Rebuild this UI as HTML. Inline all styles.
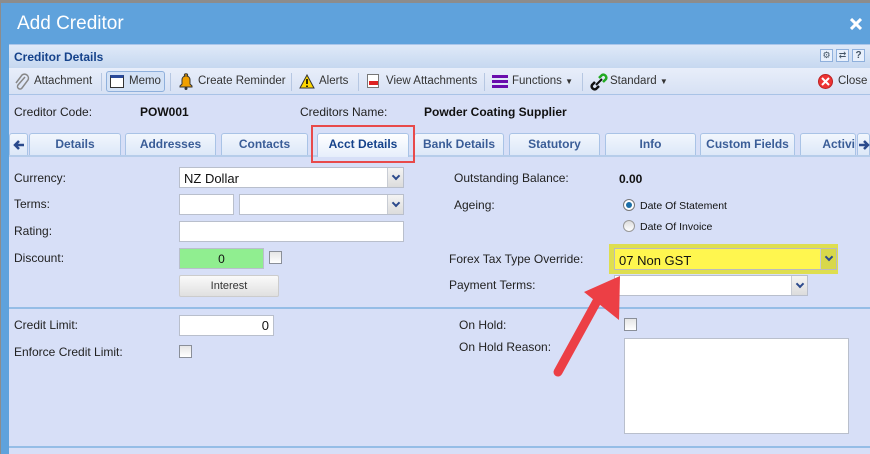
<!DOCTYPE html>
<html><head><meta charset="utf-8"><style>
*{margin:0;padding:0;box-sizing:border-box}
body{width:870px;height:454px;overflow:hidden;background:#8c8c8c;font-family:"Liberation Sans",Arial,sans-serif;font-size:12px;color:#111;position:relative}
.a{position:absolute}
.lbl{position:absolute;font-size:12px;color:#222}
.inp{position:absolute;background:#fff;border:1px solid #b9bfcc;height:21px}
.dd{position:absolute;right:0;top:0;bottom:0;width:16px;border-left:1px solid #c8ccd4;background:linear-gradient(#f4f4f4,#dcdcdc)}
.dd:after{content:"";position:absolute;left:5px;top:5px;width:4px;height:4px;border-right:2px solid #2c4a8c;border-bottom:2px solid #2c4a8c;transform:rotate(45deg)}
.tab{position:absolute;top:133px;height:22px;border:1px solid #a9c3e6;border-bottom:none;border-radius:3px 3px 0 0;background:linear-gradient(#f2f6fd,#dde8f8);color:#3a5d97;font-weight:bold;font-size:12px;text-align:center;line-height:21px}
.cb{position:absolute;width:13px;height:13px;border:1px solid #8a8f99;background:linear-gradient(#e6e6e6,#fff)}
.tb{position:absolute;top:75px;color:#333;font-size:11.5px}
.sep{position:absolute;top:73px;width:1px;height:18px;background:#b6c7e2}
</style></head><body>
<div class="a" style="left:1px;top:3px;width:869px;height:451px;background:#5fa2dc"></div>
<div class="a" style="left:17px;top:13px;font-size:19px;color:#fff">Add Creditor</div>
<svg class="a" style="left:850px;top:18px" width="12" height="12"><path d="M1 1L11 11M11 1L1 11" stroke="#fff" stroke-width="3"/></svg>
<!-- panel -->
<div class="a" style="left:9px;top:44px;width:861px;height:410px;background:#d7dff7"></div>
<div class="a" style="left:9px;top:44px;width:861px;height:24px;background:linear-gradient(#dfe9f8,#c6d8f0);border-top:1px solid #aac6ea"></div>
<div class="a" style="left:14px;top:50px;font-weight:bold;color:#15428b;font-size:12px">Creditor Details</div>
<div class="a" style="left:820px;top:49px;width:13px;height:13px;border:1px solid #8fb0dc;background:#e8f0fc;font-size:9px;color:#456;text-align:center">⚙</div>
<div class="a" style="left:836px;top:49px;width:13px;height:13px;border:1px solid #8fb0dc;background:#e8f0fc;font-size:9px;color:#456;text-align:center">⇄</div>
<div class="a" style="left:852px;top:49px;width:13px;height:13px;border:1px solid #8fb0dc;background:#e8f0fc;font-size:10px;color:#456;text-align:center;font-weight:bold">?</div>
<div class="a" style="left:9px;top:68px;width:861px;height:27px;background:linear-gradient(#e8eefa,#d7e1f4);border-bottom:1px solid #a9c3e6"></div>
<svg class="a" style="left:14px;top:73px" width="16" height="18"><path d="M11 4L4 12a2.5 2.5 0 0 0 4 3L14 7a4 4 0 0 0-6-5L2 10" fill="none" stroke="#888" stroke-width="1.5"/></svg>
<div class="tb" style="left:34px">Attachment</div>
<div class="sep" style="left:101px"></div>
<div class="a" style="left:106px;top:71px;width:59px;height:21px;border:1px solid #8fb0dc;border-radius:3px;background:#d4e2f6"></div>
<div class="a" style="left:110px;top:75px;width:14px;height:13px;border:1px solid #333;border-top:3px solid #2a4a9a;background:#fff"></div>
<div class="tb" style="left:129px">Memo</div>
<div class="sep" style="left:170px"></div>
<svg class="a" style="left:178px;top:73px" width="16" height="17"><path d="M8 1a1 1 0 0 1 1 2a4 4 0 0 1 3 4v4l2 2v1H2v-1l2-2V7a4 4 0 0 1 3-4a1 1 0 0 1 1-2z" fill="#f0a000" stroke="#333" stroke-width="1"/><circle cx="8" cy="15.5" r="1.5" fill="#333"/></svg>
<div class="tb" style="left:198px">Create Reminder</div>
<div class="sep" style="left:291px"></div>
<svg class="a" style="left:299px;top:74px" width="16" height="15"><path d="M8 1L15 14H1z" fill="#ffd800" stroke="#333"/><path d="M8 5v5M8 11.5v1.5" stroke="#000" stroke-width="1.6"/></svg>
<div class="tb" style="left:319px">Alerts</div>
<div class="sep" style="left:358px"></div>
<div class="a" style="left:367px;top:74px;width:12px;height:14px;border:1px solid #777;background:#fff"><div style="position:absolute;left:1px;top:6px;width:9px;height:4px;background:#d22"></div></div>
<div class="tb" style="left:386px">View Attachments</div>
<div class="sep" style="left:484px"></div>
<div class="a" style="left:492px;top:75px;width:16px;height:3px;background:#6a0dad;box-shadow:0 5px 0 #6a0dad,0 10px 0 #6a0dad"></div>
<div class="tb" style="left:512px">Functions <span style="font-size:8px">▼</span></div>
<div class="sep" style="left:582px"></div>
<svg class="a" style="left:590px;top:73px" width="18" height="18"><path d="M9 5l3-3a3 3 0 0 1 4 4l-3 3" fill="none" stroke="#2a2" stroke-width="2.5"/><path d="M9 13l-3 3a3 3 0 0 1-4-4l3-3" fill="none" stroke="#111" stroke-width="2.5"/><path d="M6 12l6-6" stroke="#111" stroke-width="2"/></svg>
<div class="tb" style="left:610px">Standard <span style="font-size:8px">▼</span></div>
<div class="a" style="left:818px;top:74px;width:15px;height:15px;border-radius:50%;background:#e33;border:1px solid #b22"></div>
<svg class="a" style="left:821px;top:77px" width="9" height="9"><path d="M1 1L8 8M8 1L1 8" stroke="#fff" stroke-width="2"/></svg>
<div class="tb" style="left:838px">Close</div>
<!-- info row -->
<div class="lbl" style="left:14px;top:105px">Creditor Code:</div>
<div class="a" style="left:140px;top:105px;font-weight:bold;font-size:12px">POW001</div>
<div class="lbl" style="left:300px;top:105px">Creditors Name:</div>
<div class="a" style="left:424px;top:105px;font-weight:bold;font-size:12px">Powder Coating Supplier</div>
<!-- tabs -->
<div class="a" style="left:9px;top:155px;width:861px;height:2px;background:#b6cdea"></div>
<div class="tab" style="left:9px;width:19px"><svg width="12" height="10" style="margin-top:6px"><path d="M11 5H3M6 1L2 5L6 9" fill="none" stroke="#2a4a8c" stroke-width="2.5"/></svg></div>
<div class="tab" style="left:29px;width:92px">Details</div>
<div class="tab" style="left:125px;width:91px">Addresses</div>
<div class="tab" style="left:221px;width:87px">Contacts</div>
<div class="tab" style="left:317px;width:92px;background:linear-gradient(#fff,#e6eefb);color:#15428b;height:24px">Acct Details</div>
<div class="tab" style="left:414px;width:90px">Bank Details</div>
<div class="tab" style="left:509px;width:91px">Statutory</div>
<div class="tab" style="left:605px;width:91px">Info</div>
<div class="tab" style="left:700px;width:95px">Custom Fields</div>
<div class="tab" style="left:800px;width:56px;text-align:right;overflow:hidden">Activi</div>
<div class="tab" style="left:857px;width:13px;text-align:left"><svg width="12" height="10" style="margin-top:6px"><path d="M1 5H9M6 1L10 5L6 9" fill="none" stroke="#2a4a8c" stroke-width="2.5"/></svg></div>
<div class="a" style="left:311px;top:125px;width:104px;height:38px;border:2px solid #e84a4a"></div>
<!-- left form -->
<div class="lbl" style="left:14px;top:171px">Currency:</div>
<div class="inp" style="left:179px;top:167px;width:225px"><span style="position:absolute;left:4px;top:3px;font-size:13px">NZ Dollar</span><div class="dd"></div></div>
<div class="lbl" style="left:14px;top:197px">Terms:</div>
<div class="inp" style="left:179px;top:194px;width:55px"></div>
<div class="inp" style="left:239px;top:194px;width:165px"><div class="dd"></div></div>
<div class="lbl" style="left:14px;top:224px">Rating:</div>
<div class="inp" style="left:179px;top:221px;width:225px"></div>
<div class="lbl" style="left:14px;top:251px">Discount:</div>
<div class="inp" style="left:179px;top:248px;width:85px;background:#90ee90;text-align:center;line-height:20px">0</div>
<div class="cb" style="left:269px;top:251px"></div>
<div class="a" style="left:179px;top:275px;width:100px;height:22px;border:1px solid #ccc;border-radius:2px;background:linear-gradient(#fafafa,#e0e0e0);text-align:center;line-height:20px;font-size:11px;color:#333">Interest</div>
<!-- right form -->
<div class="lbl" style="left:454px;top:171px">Outstanding Balance:</div>
<div class="a" style="left:619px;top:172px;font-weight:bold;font-size:12px">0.00</div>
<div class="lbl" style="left:454px;top:198px">Ageing:</div>
<div class="a" style="left:623px;top:199px;width:12px;height:12px;border-radius:50%;border:1px solid #777;background:#fff"><div style="position:absolute;left:2px;top:2px;width:6px;height:6px;border-radius:50%;background:#1c6fa8"></div></div>
<div class="a" style="left:640px;top:200px;font-size:10.5px">Date Of Statement</div>
<div class="a" style="left:623px;top:220px;width:12px;height:12px;border-radius:50%;border:1px solid #999;background:linear-gradient(#ddd,#fff)"></div>
<div class="a" style="left:640px;top:221px;font-size:10.5px">Date Of Invoice</div>
<div class="lbl" style="left:449px;top:252px">Forex Tax Type Override:</div>
<div class="a" style="left:609px;top:244px;width:229px;height:30px;background:#dede50"></div>
<div class="a" style="left:614px;top:248px;width:223px;height:22px;background:#fff64f;border:1px solid #bbb"><span style="position:absolute;left:4px;top:4px;font-size:13px">07 Non GST</span><div class="dd" style="background:#d8d84a"></div></div>
<div class="lbl" style="left:449px;top:278px">Payment Terms:</div>
<div class="inp" style="left:614px;top:275px;width:194px"><div class="dd"></div></div>
<!-- separators -->
<div class="a" style="left:9px;top:307px;width:861px;height:2px;background:#95bde6"></div>
<div class="a" style="left:9px;top:446px;width:861px;height:2px;background:#95bde6"></div>
<div class="lbl" style="left:14px;top:318px">Credit Limit:</div>
<div class="inp" style="left:179px;top:315px;width:95px;text-align:right;padding-right:4px;line-height:20px;font-size:13px">0</div>
<div class="lbl" style="left:14px;top:345px">Enforce Credit Limit:</div>
<div class="cb" style="left:179px;top:345px"></div>
<div class="lbl" style="left:459px;top:318px">On Hold:</div>
<div class="cb" style="left:624px;top:318px"></div>
<div class="lbl" style="left:459px;top:340px">On Hold Reason:</div>
<div class="a" style="left:624px;top:338px;width:225px;height:96px;background:#fff;border:1px solid #b9bfcc"></div>
<!-- arrow -->
<svg class="a" style="left:540px;top:262px" width="90" height="120" viewBox="0 0 90 120">
<line x1="18" y1="110" x2="62" y2="30" stroke="#ec3f45" stroke-width="9" stroke-linecap="round"/>
<polygon points="80,14 79,58 44,30" fill="#ec3f45"/>
</svg>
</body></html>
